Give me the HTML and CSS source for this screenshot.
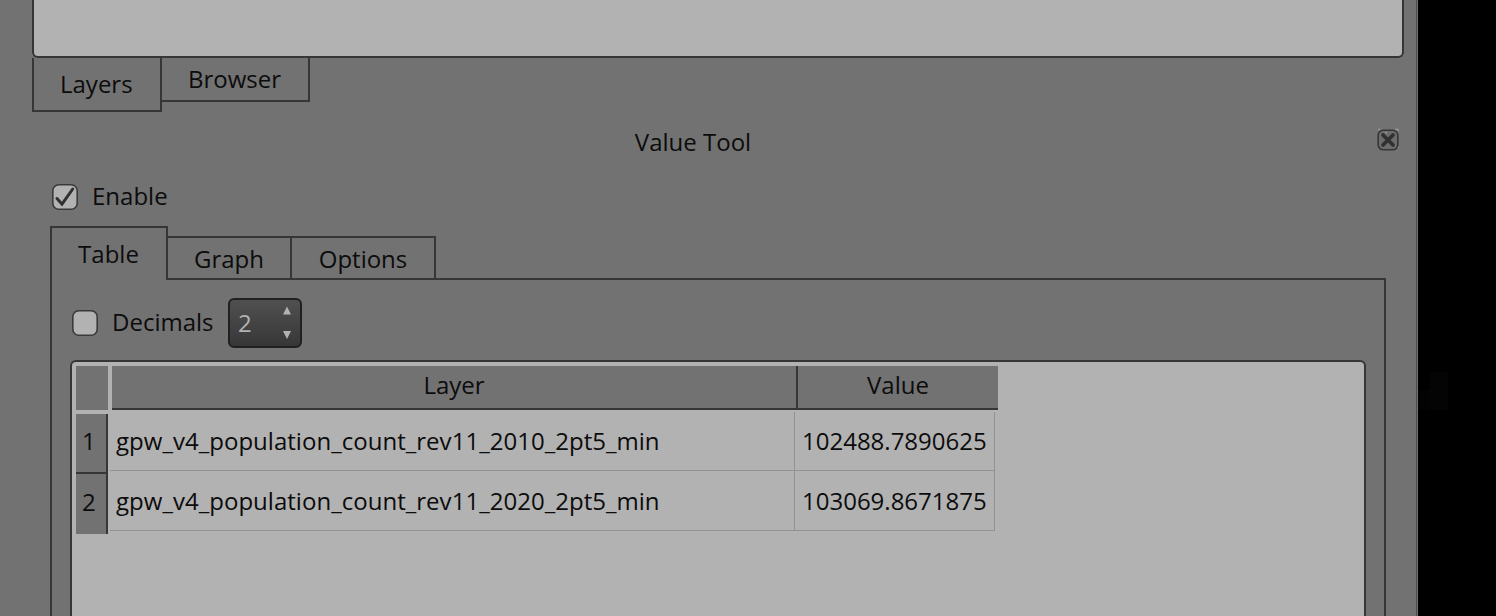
FILE: index.html
```html
<!DOCTYPE html>
<html lang="en">
<head>
<meta charset="utf-8">
<title>Value Tool</title>
<link rel="stylesheet" href="styles.css">
</head>
<body>
<main class="dock">
  <div class="layer-tree"></div>
  <nav class="bottom-tabs">
    <div class="bottom-tab bottom-tab-active">Layers</div>
    <div class="bottom-tab">Browser</div>
  </nav>
  <header class="title-bar">
    <h1 class="title">Value Tool</h1>
    <svg class="close" width="24" height="24" viewBox="0 0 24 24">
      <path d="M2 1.500h2.500M19 1.500h3v2M21 19h2" stroke="#969696" stroke-width="1.6" fill="none"/>
      <rect x="2.200" y="2.200" width="19.600" height="19.600" rx="5" fill="#6c6c6c" stroke="#363636" stroke-width="1.6"/>
      <path d="M9 4.500h2" stroke="#969696" stroke-width="1.6"/>
      <path d="M7 7l10 10M17 7L7 17" stroke="#303030" stroke-width="3.700" stroke-linecap="round"/>
    </svg>
  </header>
  <label class="enable-row">
    <svg class="check" width="26" height="26" viewBox="0 0 26 26">
      <rect x=".8" y=".8" width="24.4" height="24.4" rx="6" fill="#b2b2b2" stroke="#3a3a3a" stroke-width="1.6"/>
      <path d="M5 14.5L10 20.2L20.7 5" fill="none" stroke="#303030" stroke-width="3" stroke-linecap="round" stroke-linejoin="miter"/>
    </svg>
    <span>Enable</span>
  </label>
  <nav class="tabs">
    <div class="tab tab-active">Table</div>
    <div class="tab tab-graph">Graph</div>
    <div class="tab tab-options">Options</div>
    <div class="tab-line"></div>
  </nav>
  <section class="pane">
    <div class="decimals-row">
      <svg class="check" width="26" height="26" viewBox="0 0 26 26">
        <rect x=".8" y=".8" width="24.4" height="24.4" rx="6" fill="#b2b2b2" stroke="#3a3a3a" stroke-width="1.6"/>
      </svg>
      <span class="decimals-label">Decimals</span>
      <div class="spin">
        <span>2</span>
        <svg width="10" height="34" viewBox="0 0 10 34">
          <path d="M5 .5L9 8.5H1Z" fill="#b2b2b2"/>
          <path d="M1 25H9L5 33Z" fill="#b2b2b2"/>
        </svg>
      </div>
    </div>
    <div class="view">
      <div class="row-heads">
        <div class="corner"></div>
        <div class="row-head">1</div>
        <div class="row-head">2</div>
      </div>
      <div class="grid">
        <div class="col-heads">
          <div class="col-head col-layer">Layer</div>
          <div class="col-head">Value</div>
        </div>
        <div class="row row-first">
          <div class="cell cell-name">gpw_v4_population_count_rev11_2010_2pt5_min</div>
          <div class="cell cell-value">102488.7890625</div>
        </div>
        <div class="row">
          <div class="cell cell-name">gpw_v4_population_count_rev11_2020_2pt5_min</div>
          <div class="cell cell-value">103069.8671875</div>
        </div>
      </div>
    </div>
  </section>
</main>
<aside class="canvas"><div class="raster raster-low"></div><div class="raster"></div></aside>
</body>
</html>
```
FILE: styles.css
```css
* { box-sizing: border-box; }
body {
  margin: 0;
  height: 616px;
  display: flex;
  overflow: hidden;
  background: #000;
  color: #0c0c0c;
  font: 24px/32px "Open Sans", "Noto Sans", sans-serif;
  white-space: nowrap;
}
.dock {
  width: 1417px;
  height: 616px;
  padding: 0 12px 0 32px;
  background: #727272;
  border-right: 1px solid #4c4c4c;
  display: flex;
  flex-direction: column;
}
.layer-tree {
  height: 58px;
  flex: none;
  background: #b2b2b2;
  border: 2px solid #363636;
  border-top: 0;
  border-radius: 0 0 6px 6px;
}
.bottom-tabs { display: flex; align-items: flex-start; height: 54px; flex: none; }
.bottom-tab {
  width: 148px;
  height: 44px;
  border: solid #363636;
  border-width: 0 2px 2px 0;
  padding: 5px 0 0 26px;
}
.bottom-tab-active { width: 130px; height: 54px; border-left-width: 2px; padding-top: 10px; }
.title-bar { display: flex; height: 72px; flex: none; padding: 14px 0 0; }
.title { flex: 1; margin: 0; font: inherit; text-align: center; padding-right: 22px; }
.close { margin: 2px 4px 0 0; flex: none; }
.enable-row { display: flex; height: 42px; flex: none; padding-left: 20px; gap: 14px; line-height: 24px; }
.check { display: block; flex: none; }
.tabs { display: flex; align-items: flex-end; height: 54px; flex: none; margin: 0 18px; }
.tab {
  height: 44px;
  border: solid #363636;
  border-width: 2px 2px 2px 0;
  text-align: center;
  line-height: 42px;
}
.tab-active { width: 118px; height: 54px; border-width: 2px 2px 0; line-height: 51px; padding-right: 1px; }
.tab-graph { width: 124px; }
.tab-options { width: 144px; }
.tab-line { flex: 1; height: 2px; background: #363636; }
.pane {
  flex: 1;
  min-height: 0;
  margin: 0 18px;
  padding: 18px 18px 0;
  border: solid #363636;
  border-width: 0 2px;
  display: flex;
  flex-direction: column;
}
.decimals-row { display: flex; align-items: center; height: 50px; flex: none; padding-left: 2px; }
.decimals-label { width: 116px; margin-left: 14px; padding-bottom: 2px; }
.spin {
  width: 74px;
  height: 50px;
  border: 2px solid #202020;
  border-radius: 6px;
  background: linear-gradient(#505050, #373737);
  color: #b2b2b2;
  display: flex;
  align-items: center;
  justify-content: space-between;
  padding: 0 8px;
}
.view {
  flex: 1;
  margin-top: 12px;
  padding: 4px;
  display: flex;
  gap: 2px;
  background: #b2b2b2;
  border: 2px solid #363636;
  border-bottom: 0;
  border-radius: 6px 6px 0 0;
}
.row-heads { width: 32px; }
.corner { height: 44px; margin-bottom: 4px; background: #727272; }
.row-head {
  height: 60px;
  background: #727272;
  border: solid #363636;
  border-width: 0 2px 2px 0;
  line-height: 54px;
  padding-left: 6px;
}
.row-head + .row-head { border-bottom: 0; line-height: 55px; }
.col-heads {
  display: flex;
  width: 886px;
  height: 44px;
  margin-left: 2px;
  background: #727272;
  border-bottom: 2px solid #363636;
}
.col-head { flex: 1; text-align: center; line-height: 37px; }
.col-layer { flex: none; width: 686px; border-right: 2px solid #363636; }
.row { display: flex; width: 885px; height: 60px; border-bottom: 1px solid #929292; }
.row-first { height: 59px; margin-top: 2px; }
.cell { border-right: 1px solid #929292; line-height: 60px; }
.row-first .cell { line-height: 58px; }
.cell-name { width: 685px; padding-left: 6px; letter-spacing: 0.025px; }
.cell-value { width: 200px; padding-left: 7px; }
.canvas { width: 79px; display: flex; align-items: flex-start; border-left: 1px solid #727272; }
.raster { width: 18px; height: 38px; margin-top: 372px; background: #040404; }
.raster-low { width: 12px; height: 20px; margin-top: 390px; background: #030303; }
```
